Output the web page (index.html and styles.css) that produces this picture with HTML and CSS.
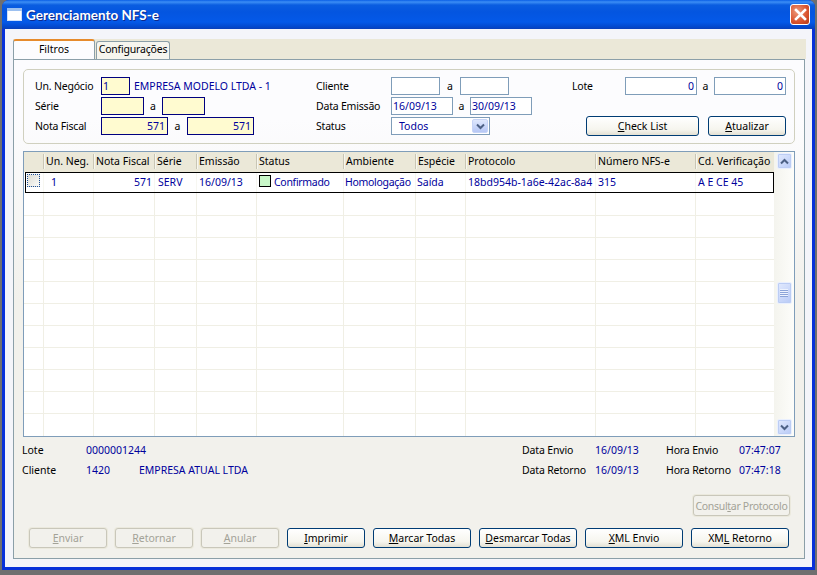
FILE: index.html
```html
<!DOCTYPE html>
<html lang="pt">
<head>
<meta charset="utf-8">
<title>Gerenciamento NFS-e</title>
<link rel="stylesheet" href="styles.css">
</head>
<body>
<div class="window">
  <header class="titlebar">
    <svg class="app-icon" width="15" height="13" viewBox="0 0 15 13"><rect x="0.5" y="0.5" width="14" height="12" fill="#fff" stroke="#cfe0fa"/><rect x="0" y="0" width="15" height="3" fill="#9cc0f0"/></svg>
    <span class="title">Gerenciamento NFS-e</span>
    <button class="close" aria-label="Fechar"><svg width="13" height="13" viewBox="0 0 13 13"><path d="M2 2 L11 11 M11 2 L2 11" stroke="#fff" stroke-width="2.6" stroke-linecap="square"/></svg></button>
  </header>
  <div class="client">
    <div class="tabs">
      <div class="tab active">Filtros</div>
      <div class="tab">Configurações</div>
    </div>
    <main class="page">
      <section class="filters">
        <div class="col col-a">
          <div class="frow"><span class="lbl l-a">Un. Negócio</span><span class="inp req w29">1</span><span class="val company">EMPRESA MODELO LTDA - 1</span></div>
          <div class="frow"><span class="lbl l-a">Série</span><span class="inp req w43"></span><span class="sep s-a1">a</span><span class="inp req w43"></span></div>
          <div class="frow"><span class="lbl l-a">Nota Fiscal</span><span class="inp req w67 right">571</span><span class="sep s-a2">a</span><span class="inp req w67 right">571</span></div>
        </div>
        <div class="col col-b">
          <div class="frow"><span class="lbl l-b">Cliente</span><span class="inp w49"></span><span class="sep s-b1">a</span><span class="inp w49"></span></div>
          <div class="frow"><span class="lbl l-b">Data Emissão</span><span class="inp w62">16/09/13</span><span class="sep s-b2">a</span><span class="inp w62">30/09/13</span></div>
          <div class="frow"><span class="lbl l-b">Status</span>
            <span class="inp select"><span class="select-text">Todos</span><span class="combo"><svg width="9" height="7" viewBox="0 0 9 7"><path d="M1 1.5 L4.5 5 L8 1.5" fill="none" stroke="#4d6185" stroke-width="2"/></svg></span></span>
          </div>
        </div>
        <div class="col col-c">
          <div class="frow"><span class="lbl l-c">Lote</span><span class="inp w72 right">0</span><span class="sep s-c1">a</span><span class="inp w72 right">0</span></div>
          <div class="frow"></div>
          <div class="frow frow-btn"><button class="btn w113"><u>C</u>heck List</button><button class="btn w78"><u>A</u>tualizar</button></div>
        </div>
      </section>

      <section class="grid">
        <div class="table">
          <div class="thead">
            <span class="th"></span><span class="th">Un. Neg.</span><span class="th">Nota Fiscal</span><span class="th">Série</span><span class="th">Emissão</span><span class="th">Status</span><span class="th">Ambiente</span><span class="th">Espécie</span><span class="th">Protocolo</span><span class="th">Número NFS-e</span><span class="th">Cd. Verificação</span>
          </div>
          <div class="tr selected">
            <span class="td"><span class="check"></span></span><span class="td c-un">1</span><span class="td right">571</span><span class="td c-serie">SERV</span><span class="td">16/09/13</span><span class="td tight"><span class="status-box"></span>Confirmado</span><span class="td tight c-amb">Homologação</span><span class="td c-esp">Saída</span><span class="td">18bd954b-1a6e-42ac-8a4</span><span class="td">315</span><span class="td">A E CE 45</span>
          </div>
          <div class="tr"><span class="td"></span><span class="td"></span><span class="td"></span><span class="td"></span><span class="td"></span><span class="td"></span><span class="td"></span><span class="td"></span><span class="td"></span><span class="td"></span><span class="td"></span></div>
          <div class="tr"><span class="td"></span><span class="td"></span><span class="td"></span><span class="td"></span><span class="td"></span><span class="td"></span><span class="td"></span><span class="td"></span><span class="td"></span><span class="td"></span><span class="td"></span></div>
          <div class="tr"><span class="td"></span><span class="td"></span><span class="td"></span><span class="td"></span><span class="td"></span><span class="td"></span><span class="td"></span><span class="td"></span><span class="td"></span><span class="td"></span><span class="td"></span></div>
          <div class="tr"><span class="td"></span><span class="td"></span><span class="td"></span><span class="td"></span><span class="td"></span><span class="td"></span><span class="td"></span><span class="td"></span><span class="td"></span><span class="td"></span><span class="td"></span></div>
          <div class="tr"><span class="td"></span><span class="td"></span><span class="td"></span><span class="td"></span><span class="td"></span><span class="td"></span><span class="td"></span><span class="td"></span><span class="td"></span><span class="td"></span><span class="td"></span></div>
          <div class="tr"><span class="td"></span><span class="td"></span><span class="td"></span><span class="td"></span><span class="td"></span><span class="td"></span><span class="td"></span><span class="td"></span><span class="td"></span><span class="td"></span><span class="td"></span></div>
          <div class="tr"><span class="td"></span><span class="td"></span><span class="td"></span><span class="td"></span><span class="td"></span><span class="td"></span><span class="td"></span><span class="td"></span><span class="td"></span><span class="td"></span><span class="td"></span></div>
          <div class="tr"><span class="td"></span><span class="td"></span><span class="td"></span><span class="td"></span><span class="td"></span><span class="td"></span><span class="td"></span><span class="td"></span><span class="td"></span><span class="td"></span><span class="td"></span></div>
          <div class="tr"><span class="td"></span><span class="td"></span><span class="td"></span><span class="td"></span><span class="td"></span><span class="td"></span><span class="td"></span><span class="td"></span><span class="td"></span><span class="td"></span><span class="td"></span></div>
          <div class="tr"><span class="td"></span><span class="td"></span><span class="td"></span><span class="td"></span><span class="td"></span><span class="td"></span><span class="td"></span><span class="td"></span><span class="td"></span><span class="td"></span><span class="td"></span></div>
          <div class="tr last"><span class="td"></span><span class="td"></span><span class="td"></span><span class="td"></span><span class="td"></span><span class="td"></span><span class="td"></span><span class="td"></span><span class="td"></span><span class="td"></span><span class="td"></span></div>
        </div>
        <div class="scrollbar">
          <span class="sb-btn"><svg width="9" height="7" viewBox="0 0 9 7"><path d="M1 5.5 L4.5 2 L8 5.5" fill="none" stroke="#4d6185" stroke-width="2"/></svg></span>
          <span class="sb-thumb"><svg width="8" height="8" viewBox="0 0 8 8"><path d="M0 0.5H8M0 2.5H8M0 4.5H8M0 6.5H8" stroke="#eef3fe" stroke-width="1"/><path d="M0 1.5H8M0 3.5H8M0 5.5H8M0 7.5H8" stroke="#8ca4d8" stroke-width="1"/></svg></span>
          <span class="sb-btn"><svg width="9" height="7" viewBox="0 0 9 7"><path d="M1 1.5 L4.5 5 L8 1.5" fill="none" stroke="#4d6185" stroke-width="2"/></svg></span>
        </div>
      </section>

      <section class="details">
        <div class="drow"><span class="d-l">Lote</span><span class="val d-code">0000001244</span><span class="d-gap"></span><span class="d-r1">Data Envio</span><span class="val d-date">16/09/13</span><span class="d-r2">Hora Envio</span><span class="val">07:47:07</span></div>
        <div class="drow"><span class="d-l">Cliente</span><span class="val d-code2">1420</span><span class="val d-name">EMPRESA ATUAL LTDA</span><span class="d-gap"></span><span class="d-r1">Data Retorno</span><span class="val d-date">16/09/13</span><span class="d-r2">Hora Retorno</span><span class="val">07:47:18</span></div>
      </section>

      <div class="consult-row"><button class="btn disabled consult">Consul<u>t</u>ar Protocolo</button></div>

      <footer class="actions">
        <button class="btn disabled w78"><u>E</u>nviar</button>
        <button class="btn disabled w78"><u>R</u>etornar</button>
        <button class="btn disabled w78"><u>A</u>nular</button>
        <button class="btn w78"><u>I</u>mprimir</button>
        <button class="btn w98"><u>M</u>arcar Todas</button>
        <button class="btn w98"><u>D</u>esmarcar Todas</button>
        <button class="btn w98"><u>X</u>ML Envio</button>
        <button class="btn w98">XM<u>L</u> Retorno</button>
      </footer>
    </main>
  </div>
</div>
</body>
</html>
```

FILE: styles.css
```css
* { box-sizing: border-box; }
html, body { margin: 0; padding: 0; }
body {
  width: 817px; height: 575px; overflow: hidden;
  background: #6f6f6f;
  font-family: "Noto Sans", Tahoma, sans-serif;
  font-size: 10.5px;
  line-height: 14px;
  color: #000;
}
.window {
  width: 813px; height: 570px;
  margin-left: 2px;
  display: flex; flex-direction: column;
  background: #0831d9;
  border-radius: 7px 7px 0 0;
  padding: 0 3px 3px;
  overflow: hidden;
}
.titlebar {
  height: 29px; flex: none;
  margin: 0 -3px;
  padding: 0 5px 0 5px;
  display: flex; align-items: center;
  background: linear-gradient(#0a5fe6 0, #3c8ef5 2px, #0a5de0 5px, #0455e0 12px, #0459e8 22px, #0348cc 27px, #0a3fb8 29px);
}
.app-icon { flex: none; }
.title {
  margin-left: 4px; flex: 1;
  font-family: Lato, sans-serif;
  font-size: 13.5px; font-weight: 700;
  color: #fff;
  text-shadow: 1px 1px 0 #0f2a8c;
}
.close {
  width: 20px; height: 21px; padding: 0;
  display: flex; align-items: center; justify-content: center;
  border: 1px solid #fff; border-radius: 3px;
  background: radial-gradient(circle at 35% 35%, #ec9a7c, #d9532e 60%, #b53a17);
}
.client {
  flex: 1; min-height: 0;
  background: #f4f5fa;
  padding: 10px 7px 8px 8px;
  display: flex; flex-direction: column;
}
.tabs {
  height: 20px; flex: none;
  display: flex; align-items: flex-end;
  background: #ebe8d8;
  margin-right: -1px;
}
.tab {
  width: 74px; height: 18px;
  background: #f6f5ee;
  border: 1px solid #8b9fa8; border-bottom: 0;
  border-radius: 3px 3px 0 0;
  text-align: center;
  margin-left: 1px;
  letter-spacing: -0.2px;
}
.tab.active {
  width: 82px; height: 20px; margin-left: 0;
  background: #fcfcfe;
  border: 1px solid #8b9fa8; border-top: 2px solid #e68b2c; border-bottom: 0;
  padding-top: 1px;
  letter-spacing: 0;
}
.page {
  flex: 1; min-height: 0;
  border: 1px solid #8b9fa8;
  background: linear-gradient(#fcfcfe 0, #fcfcfe 12%, #f2f1ec 48%);
  padding: 9px 9px 0 9px;
  display: flex; flex-direction: column;
}
.filters {
  height: 75px; flex: none;
  border: 1px solid #d0d0bf; border-radius: 5px;
  padding: 7px 0 0 11px;
  display: flex;
}
.col { display: flex; flex-direction: column; gap: 2px; }
.col-a { width: 281px; }
.col-b { width: 256px; }
.col-c { flex: 1; }
.frow { height: 18px; display: flex; align-items: center; }
.frow-btn { height: 20px; margin-top: -1px; padding-left: 14px; gap: 9px; }
.lbl { flex: none; letter-spacing: -0.2px; }
.l-a { width: 66px; }
.l-b { width: 75px; }
.l-c { width: 53px; }
.val { color: #00009c; }
.company { margin-left: 4px; }
.inp {
  flex: none; display: block;
  height: 18px;
  border: 1px solid #7f9db9;
  background: #fff;
  color: #00009c;
  padding: 1px 1px;
}
.inp.req { background: #fffbd0; border-color: #00007f; }
.right { text-align: right; }
.inp.right { padding-right: 2px; }
.w29 { width: 29px; }
.w43 { width: 43px; }
.w49 { width: 49px; }
.w62 { width: 62px; }
.w67 { width: 67px; }
.w72 { width: 72px; }
.w78 { width: 78px; }
.w98 { width: 98px; }
.w113 { width: 113px; }
.sep { flex: none; text-align: center; }
.s-a1 { width: 18px; }
.s-a2 { width: 19px; }
.s-b1 { width: 20px; }
.s-b2 { width: 17px; }
.s-c1 { width: 17px; }
.select {
  width: 99px; display: flex; align-items: center; justify-content: space-between;
  padding: 1px 1px 1px 7px;
}
.combo {
  width: 16px; height: 14px; display: flex; align-items: center; justify-content: center;
  background: linear-gradient(#dfe8fd, #b6c7f5);
  border: 1px solid #c6d4f7; border-radius: 2px;
}
.btn {
  flex: none; height: 20px; padding: 0;
  font: inherit; color: #000;
  border: 1px solid #003c74; border-radius: 3px;
  background: linear-gradient(#fff, #f6f5ee 70%, #e3e0d3);
  text-align: center;
  white-space: nowrap;
}
.btn.disabled {
  color: #a3a297; border-color: #c9c7ba; background: #f2f1ec;
  box-shadow: 0 0 0 1px #ebe9dd;
}
.grid {
  margin-top: 7px;
  height: 286px; flex: none;
  border: 1px solid #7f9db9;
  background: #fff;
  display: flex;
}
.table { width: 750px; flex: none; display: flex; flex-direction: column; overflow: hidden; }
.thead, .tr {
  display: grid;
  grid-template-columns: 19px 50px 61px 42px 60px 87px 72px 50px 130px 100px 79px;
}
.thead { height: 20px; background: #ebe8d8; align-items: center; padding-bottom: 2px; }
.th { height: 15px; padding-left: 2px; border-left: 1px solid #c9c6b5; box-shadow: 1px 0 0 #f7f6ee inset; line-height: 15px; white-space: nowrap; overflow: hidden; }
.th:first-child { border-left: 0; box-shadow: none; }
.tr { height: 22px; border-bottom: 1px solid #f0efe5; }
.td { border-left: 1px solid #f0efe5; color: #00009c; padding: 3px 2px 0 2px; white-space: nowrap; overflow: hidden; display: flex; align-items: flex-start; }
.td:first-child { border-left: 0; padding-left: 1px; }
.td.right { justify-content: flex-end; }
.c-un { padding-left: 7px; }
.c-serie { padding-left: 3px; }
.c-esp { padding-left: 1px; }
.tight { letter-spacing: -0.3px; }
.c-amb { padding-left: 1px; }
.tr.selected {
  height: 21px; margin-left: 1px;
  border: 1px solid #000;
  grid-template-columns: 17px 50px 61px 42px 60px 87px 72px 50px 130px 100px 78px;
}
.tr.selected + .tr { height: 23px; }
.tr.selected .td { border-left-color: #f7f7f1; padding-top: 2px; }
.tr.last { border-bottom: 0; flex: 1; }
.check {
  width: 13px; height: 13px; margin: -1px 0 0 0; display: block;
  border: 1px dotted #1c4f99;
  background: linear-gradient(135deg, #dcdcd4, #fbfbf8);
}
.status-box {
  width: 12px; height: 12px; margin-right: 3px; flex: none;
  border: 1px solid #000; background: #c8f7c8;
}
.scrollbar {
  flex: 1; display: flex; flex-direction: column; align-items: center;
  padding: 1px 0;
  background: linear-gradient(90deg, #f4f4ee, #fdfdfa);
}
.sb-btn, .sb-thumb {
  width: 15px; height: 16px; display: flex; align-items: center; justify-content: center;
  background: linear-gradient(135deg, #e2eafe, #b8caf6);
  border: 1px solid #eaf0fe; border-radius: 2px;
  box-shadow: 0 0 0 1px #bccdf4 inset;
}
.sb-thumb { height: 22px; margin-top: 113px; margin-bottom: 115px; }
.details { margin-top: 3px; height: 40px; margin-left: -1px; display: flex; flex-direction: column; }
.drow { height: 20px; display: flex; align-items: center; }
.d-l { width: 64px; }
.d-code { width: 70px; }
.d-code2 { width: 53px; }
.d-gap { flex: 1; }
.d-r1 { width: 73px; flex: none; letter-spacing: -0.15px; }
.d-date { width: 71px; flex: none; }
.d-r2 { width: 73px; flex: none; letter-spacing: -0.15px; }
.drow > .val:last-child { width: 56px; flex: none; }
.consult-row { margin-top: 15px; display: flex; justify-content: flex-end; padding-right: 5px; }
.consult { width: 97px; height: 21px; letter-spacing: -0.3px; }
.actions { margin-top: 12px; margin-left: 6px; display: flex; gap: 8px; }
```
